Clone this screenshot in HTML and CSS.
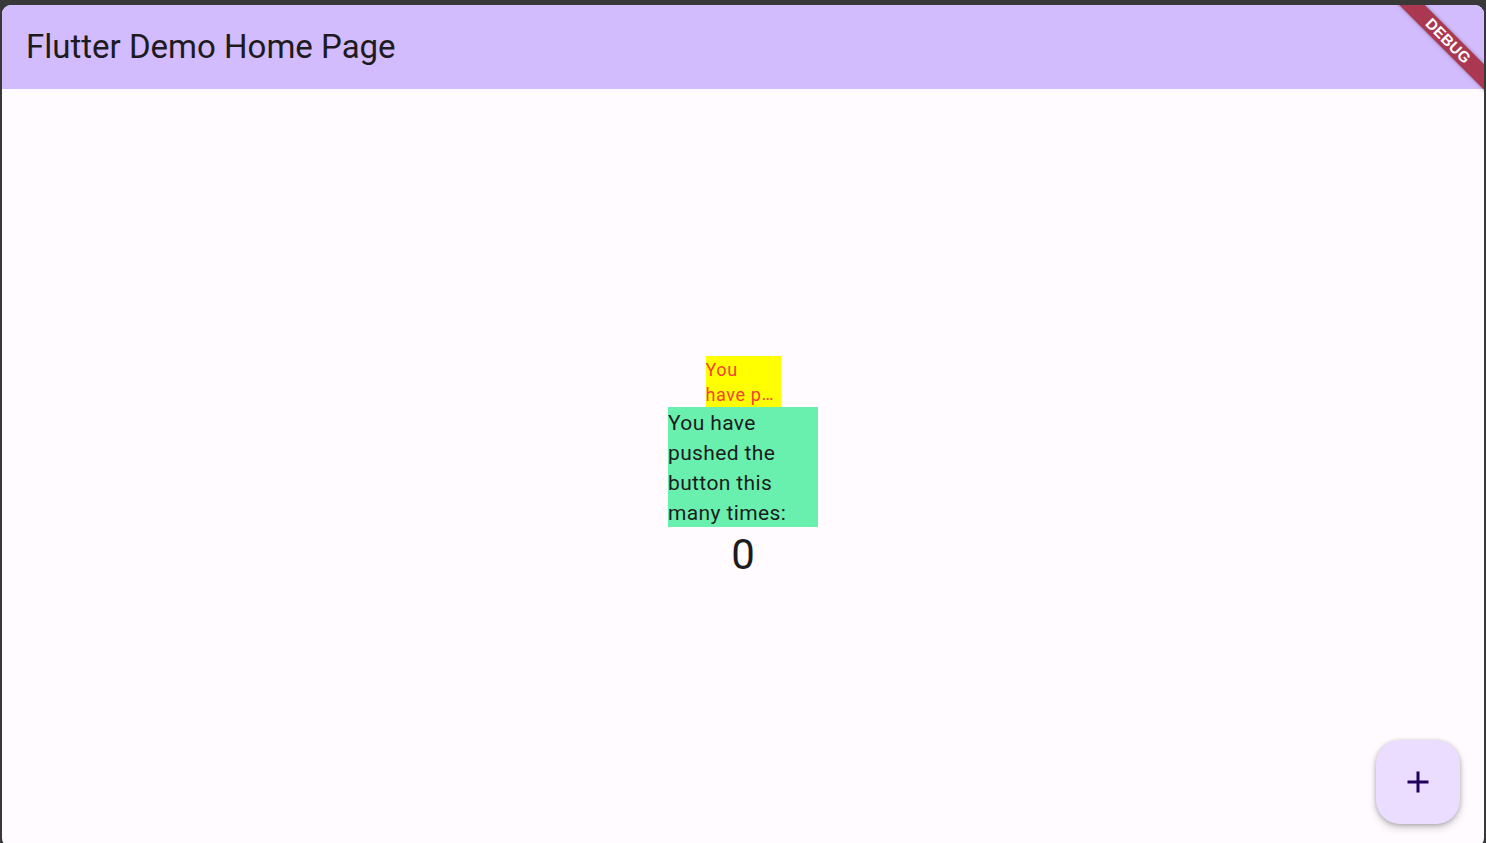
FILE: index.html
```html
<!DOCTYPE html>
<html lang="en">
<head>
<meta charset="utf-8">
<title>Flutter Demo Home Page</title>
<link rel="stylesheet" href="styles.css">
</head>
<body>
<div class="window">
  <header class="appbar">
    <h1 class="title">Flutter Demo Home Page</h1>
  </header>
  <main class="content">
    <div class="column">
      <div class="small-box">
        <span class="line"><span class="txt">You</span></span>
        <span class="line clip"><span class="txt">have pushed the button this many times:</span></span>
      </div>
      <div class="green-box"><span class="txt">You have pushed the button this many times:</span></div>
      <div class="counter"><span class="txt">0</span></div>
    </div>
  </main>
  <button class="fab" aria-label="Increment">
    <svg width="36" height="36" viewBox="0 0 24 24" aria-hidden="true">
      <path d="M19 13h-6v6h-2v-6H5v-2h6V5h2v6h6v2z" fill="#21005d"/>
    </svg>
  </button>
  <div class="banner">DEBUG</div>
</div>
</body>
</html>
```
FILE: styles.css
```css
html, body {
  margin: 0;
  padding: 0;
  height: 100%;
  overflow: hidden;
  background: #383838;
}
.window {
  position: relative;
  margin: 5px 2px 0 2px;
  height: 842px;
  border-radius: 9px;
  overflow: hidden;
  background: #fffbfe;
  display: flex;
  flex-direction: column;
  font-family: Roboto, "Liberation Sans", sans-serif;
  color: #1d1b20;
}
.appbar {
  height: 84px;
  flex: 0 0 84px;
  background: #d3bcfd;
  display: flex;
  align-items: center;
  padding-left: 24px;
}
.title {
  margin: 0;
  font-size: 33px;
  font-weight: 400;
  line-height: 42px;
  color: #1d1b20;
}
.content {
  flex: 1;
  display: flex;
  align-items: center;
  justify-content: center;
}
.column {
  display: flex;
  flex-direction: column;
  align-items: center;
}
/* Flutter puts extra leading mostly above the glyphs: nudge text down inside its line */
.txt {
  vertical-align: -1px;
}
.small-box {
  width: 75px;
  height: 51px;
  background: #ffff00;
  color: #f44336;
  font-size: 18px;
  letter-spacing: 0.6px;
}
.line {
  display: block;
  height: 25.5px;
  line-height: 25.5px;
  overflow: hidden;
}
.line .txt {
  line-height: 20px;
}
.clip {
  white-space: nowrap;
  text-overflow: ellipsis;
}
.green-box {
  width: 150px;
  height: 120px;
  background: #69f0ae;
  font-size: 21px;
  line-height: 30px;
  letter-spacing: 0.375px;
}
.green-box .txt {
  line-height: 24px;
}
.counter {
  font-size: 42px;
  height: 54px;
  line-height: 54px;
}
.counter .txt {
  line-height: 48px;
}
.fab {
  position: absolute;
  right: 24px;
  bottom: 23px;
  width: 84px;
  height: 84px;
  border: none;
  border-radius: 24px;
  background: #eaddff;
  display: flex;
  align-items: center;
  justify-content: center;
  padding: 0;
  box-shadow: 0 4px 9px rgba(0, 0, 0, 0.18), 0 1px 4px rgba(0, 0, 0, 0.22);
}
.banner {
  position: absolute;
  top: 27px;
  right: -64px;
  width: 200px;
  height: 18px;
  transform: rotate(45deg);
  background: rgba(160, 22, 38, 0.8);
  box-shadow: 0 0 4px rgba(0, 0, 0, 0.35);
  color: #fff;
  font-family: "Liberation Sans", Roboto, sans-serif;
  font-weight: 900;
  font-size: 15.3px;
  line-height: 18px;
  text-align: center;
  letter-spacing: 0.3px;
}
```
